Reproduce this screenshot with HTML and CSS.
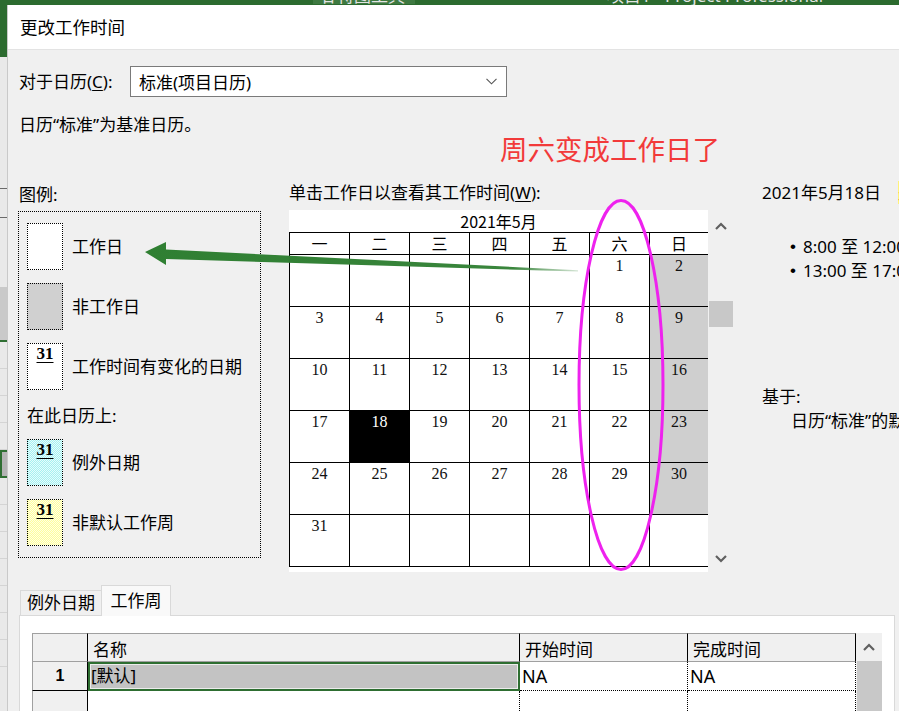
FILE: index.html
```html
<!DOCTYPE html>
<html lang="zh-CN">
<head>
<meta charset="utf-8">
<title>更改工作时间</title>
<link rel="stylesheet" href="styles.css">
</head>
<body>
<div class="app">
  <div class="topbar">
    <span class="tb-ctx">甘特图工具</span>
    <span class="tb-title">项目1 - Project Professional</span>
  </div>
  <div class="main">
    <div class="strip">
      <div class="s-green"></div>
      <div class="s-light s-h131"></div>
      <div class="s-line"></div>
      <div class="s-light s-h28"></div>
      <div class="s-line"></div>
      <div class="s-light s-h69"></div>
      <div class="s-grey"></div>
      <div class="s-gline"></div>
      <div class="s-row"></div>
      <div class="s-row"></div>
      <div class="s-row"></div>
      <div class="s-row"></div>
      <div class="s-sel"></div>
      <div class="s-row"></div>
      <div class="s-row"></div>
      <div class="s-row"></div>
      <div class="s-row"></div>
      <div class="s-row"></div>
      <div class="s-row"></div>
      <div class="s-row"></div>
    </div>
    <div class="dialog">
      <div class="titlebar">更改工作时间</div>
      <div class="body">
        <div class="row1">
          <span class="row1-label">对于日历(<u>C</u>):</span>
          <div class="select">
            <span>标准(项目日历)</span>
            <svg class="chev" width="11" height="7" viewBox="0 0 11 7"><polyline points="0.5,0.8 5.5,5.8 10.5,0.8" fill="none" stroke="#555" stroke-width="1.1"/></svg>
          </div>
        </div>
        <div class="row2">日历“标准”为基准日历。</div>
        <div class="cols">
          <div class="legend-col">
            <div class="lbl">图例:</div>
            <div class="legend">
              <div class="item"><div class="sw sw-work"></div><span class="itxt">工作日</span></div>
              <div class="item"><div class="sw sw-non"></div><span class="itxt">非工作日</span></div>
              <div class="item"><div class="sw sw-work"><span class="n31">31</span></div><span class="itxt">工作时间有变化的日期</span></div>
              <div class="onthis">在此日历上:</div>
              <div class="item"><div class="sw sw-exc"><span class="n31">31</span></div><span class="itxt">例外日期</span></div>
              <div class="item"><div class="sw sw-nd"><span class="n31">31</span></div><span class="itxt">非默认工作周</span></div>
            </div>
          </div>
          <div class="cal-col">
            <div class="cal-lbl">单击工作日以查看其工作时间(<u>W</u>):</div>
            <div class="cal">
              <div class="cal-white">
                <div class="cal-title">2021年5月</div>
                <div class="grid">
                  <div class="hd">一</div><div class="hd">二</div><div class="hd">三</div><div class="hd">四</div><div class="hd">五</div><div class="hd">六</div><div class="hd">日</div>
                  <div class="d"></div><div class="d"></div><div class="d"></div><div class="d"></div><div class="d"></div><div class="d">1</div><div class="d off">2</div>
                  <div class="d">3</div><div class="d">4</div><div class="d">5</div><div class="d">6</div><div class="d">7</div><div class="d">8</div><div class="d off">9</div>
                  <div class="d">10</div><div class="d">11</div><div class="d">12</div><div class="d">13</div><div class="d">14</div><div class="d">15</div><div class="d off">16</div>
                  <div class="d">17</div><div class="d sel">18</div><div class="d">19</div><div class="d">20</div><div class="d">21</div><div class="d">22</div><div class="d off">23</div>
                  <div class="d">24</div><div class="d">25</div><div class="d">26</div><div class="d">27</div><div class="d">28</div><div class="d">29</div><div class="d off">30</div>
                  <div class="d">31</div><div class="d"></div><div class="d"></div><div class="d"></div><div class="d"></div><div class="d"></div><div class="d"></div>
                </div>
              </div>
              <div class="cal-scroll">
                <div class="sarrow"><svg width="12" height="8" viewBox="0 0 12 8"><polyline points="1,7 6,2 11,7" fill="none" stroke="#606060" stroke-width="2.2"/></svg></div>
                <div class="sgap"></div>
                <div class="sthumb"></div>
                <div class="sfill"></div>
                <div class="sarrow sdown"><svg width="12" height="8" viewBox="0 0 12 8"><polyline points="1,1 6,6 11,1" fill="none" stroke="#606060" stroke-width="2.2"/></svg></div>
              </div>
            </div>
          </div>
          <div class="info-col">
            <div class="info-date">2021年5月18日<span class="hl">是工作日。</span></div>
            <ul class="times">
              <li><span class="dot">•</span>8:00 至 12:00</li>
              <li><span class="dot">•</span>13:00 至 17:00</li>
            </ul>
            <div class="based">基于:</div>
            <div class="based-on">日历“标准”的默认工作周。</div>
          </div>
        </div>
        <div class="tabs">
          <div class="tab">例外日期</div>
          <div class="tab active">工作周</div>
        </div>
        <div class="panel">
          <div class="table">
            <div class="tgrid">
              <div class="th rn"></div>
              <div class="th">名称</div>
              <div class="th">开始时间</div>
              <div class="th">完成时间</div>
              <div class="td rn rn1">1</div>
              <div class="td name">[默认]</div>
              <div class="td dat">NA</div>
              <div class="td dat">NA</div>
              <div class="td rn rn2"></div>
              <div class="td dat2"></div>
              <div class="td dat2"></div>
              <div class="td dat2"></div>
            </div>
            <div class="tscroll">
              <div class="tarrow"><svg width="12" height="8" viewBox="0 0 12 8"><polyline points="1,7 6,2 11,7" fill="none" stroke="#606060" stroke-width="2.2"/></svg></div>
              <div class="tthumb"></div>
            </div>
          </div>
        </div>
      </div>
    </div>
  </div>
  <div class="annot">周六变成工作日了</div>
  <svg class="overlay" width="899" height="711" viewBox="0 0 899 711">
    <defs>
      <linearGradient id="fade" x1="145" y1="0" x2="578" y2="0" gradientUnits="userSpaceOnUse">
        <stop offset="0" stop-color="#2f7f32" stop-opacity="1"/>
        <stop offset="0.85" stop-color="#2f7f32" stop-opacity="0.95"/>
        <stop offset="1" stop-color="#2f7f32" stop-opacity="0.2"/>
      </linearGradient>
    </defs>
    <polygon points="145,252 166,242 166,249.5 578,270.3 578,271.5 166,259 166,265" fill="url(#fade)"/>
    <ellipse cx="621" cy="385" rx="42" ry="184.5" fill="none" stroke="#ee22ee" stroke-width="3"/>
  </svg>
</div>
</body>
</html>
```
FILE: styles.css
```css
* { box-sizing: border-box; margin: 0; padding: 0; }
html, body { width: 899px; height: 711px; overflow: hidden; }
body {
  font-family: "Noto Sans", "Noto Sans CJK SC", "Microsoft YaHei", sans-serif;
  font-size: 17px;
  color: #000;
  background: #f0f0f0;
}
u { text-decoration: underline; text-underline-offset: 2px; text-decoration-thickness: 1px; }

.app { position: relative; width: 899px; height: 711px; display: flex; flex-direction: column; overflow: hidden; }

/* background application top bar */
.topbar { height: 5px; flex: none; background: #2c6b2f; display: flex; overflow: hidden; }
.tb-ctx {
  margin-left: 313px; width: 102px; height: 17px; margin-top: -13px;
  background: #3e7941; color: #e4e4e4; font-size: 17px; line-height: 17px; padding-left: 7px;
  white-space: nowrap; flex: none;
}
.tb-title {
  margin-left: 192px; height: 17px; margin-top: -13px; color: #e4e4e4;
  font-size: 17px; line-height: 17px; white-space: nowrap; flex: none;
}

.main { flex: 1; display: flex; min-height: 0; }

/* background application left strip */
.strip { width: 8px; flex: none; display: flex; flex-direction: column; background: #e9e9e9; border-right: 1px solid #c9c9c9; overflow: hidden; }
.s-green { height: 52px; background: #2c6b2f; flex: none; }
.s-light { background: #e9e9e9; flex: none; }
.s-h131 { height: 131px; }
.s-h28 { height: 28px; }
.s-h69 { height: 69px; }
.s-line { height: 1px; background: #6a6a6a; flex: none; }
.s-grey { height: 53px; background: #c9c9c9; flex: none; }
.s-gline { height: 2px; background: #2f6f33; flex: none; }
.s-row { height: 27px; border-bottom: 1px solid #d4d4d4; flex: none; }
.s-sel { height: 28px; border: 2px solid #2f6f33; border-right: none; background: #b4b4b4; flex: none; }

/* dialog */
.dialog { flex: 1; display: flex; flex-direction: column; background: #f0f0f0; min-width: 0; }
.titlebar {
  height: 45px; flex: none; background: #fff; border-bottom: 1px solid #e3e3e3;
  display: flex; align-items: center; padding-left: 12px; padding-bottom: 1px; font-size: 17.5px;
}
.body { flex: 1; padding: 16px 0 0 11px; display: flex; flex-direction: column; overflow: hidden; min-height: 0; }

.row1 { display: flex; align-items: center; height: 31px; flex: none; }
.row1-label { width: 111px; flex: none; line-height: 24px; }
.select {
  width: 377px; height: 31px; background: #fff; border: 1px solid #7a7a7a;
  display: flex; align-items: center; justify-content: space-between; padding: 0 9px 0 8px;
}
.chev { display: block; }
.row2 { margin-top: 16px; height: 24px; line-height: 24px; flex: none; }

.cols { margin-top: 46px; display: flex; align-items: flex-start; flex: none; white-space: nowrap; }

/* legend */
.legend-col { width: 242px; flex: none; }
.lbl { line-height: 24px; height: 24px; }
.legend {
  margin-top: 4px; margin-left: -1px; width: 243px; height: 347px;
  border: 1px dotted #000; padding: 11px 0 0 8px; display: flex; flex-direction: column;
}
.item { display: flex; align-items: center; height: 47px; flex: none; }
.item + .item { margin-top: 13px; }
.itxt { margin-left: 9px; line-height: 24px; }
.onthis { margin: 14px 0 11px; line-height: 24px; height: 24px; flex: none; }
.sw { width: 36px; height: 47px; border: 1px dotted #000; flex: none; display: flex; justify-content: center; align-items: flex-start; }
.sw-work { background: #fff; }
.sw-non { background: #d0d0d0; }
.sw-exc { background: repeating-conic-gradient(#a6f1f1 0 25%, #e6fdfd 0 50%) 0 0 / 2px 2px; }
.sw-nd { background: repeating-conic-gradient(#ffff9c 0 25%, #ffffe6 0 50%) 0 0 / 2px 2px; }
.n31 {
  font-family: "Liberation Serif", "Times New Roman", serif; font-weight: bold; font-size: 17px;
  line-height: 15px; margin-top: 2px; text-decoration: underline; text-underline-offset: 3px;
  text-decoration-thickness: 1px;
}

/* calendar */
.cal-col { width: 444px; margin-left: 28px; flex: none; }
.cal-lbl { line-height: 20px; height: 20px; }
.cal { margin-top: 7px; height: 362px; display: flex; }
.cal-white { width: 419px; height: 362px; background: #fff; overflow: hidden; flex: none; }
.cal-title { height: 22px; line-height: 22px; text-align: center; font-size: 16px; font-family: "Noto Sans CJK SC", sans-serif; }
.grid {
  display: grid; grid-template-columns: repeat(6, 60px) 59px;
  grid-template-rows: 22px repeat(6, 52px); border-bottom: 1px solid #000;
}
.hd, .d { border-left: 1px solid #000; border-top: 1px solid #000; }
.hd { text-align: center; line-height: 20px; font-size: 16px; font-family: "Noto Sans CJK SC", sans-serif; }
.d {
  text-align: center; font-family: "Liberation Serif", "Times New Roman", serif;
  font-size: 16px; line-height: 20px; padding-top: 1px; color: #111;
}
.d.off { background: #cfcfcf; }
.d.sel { background: #000; color: #fff; }
.cal-scroll { width: 25px; display: flex; flex-direction: column; flex: none; }
.sarrow { height: 32px; display: flex; align-items: center; justify-content: center; flex: none; }
.sdown { height: 26px; }
.sgap { height: 59px; flex: none; }
.sthumb { height: 26px; margin-left: 1px; background: #c8c8c8; flex: none; }
.sfill { flex: 1; }

/* info */
.info-col { margin-left: 29px; flex: none; }
.info-date { line-height: 20px; height: 20px; }
.hl { background: #fff27a; margin-left: 17px; }
.times { list-style: none; margin-top: 32px; padding-left: 28px; }
.times li { line-height: 24px; height: 24px; display: flex; }
.dot { display: inline-block; width: 13px; flex: none; font-family: "Liberation Sans", Arial, sans-serif; }
.based { margin-top: 102px; line-height: 24px; }
.based-on { padding-left: 29px; line-height: 24px; }

/* tabs */
.tabs { margin-top: 13px; height: 31px; display: flex; align-items: flex-end; padding-left: 1px; flex: none; }
.tab {
  width: 82px; height: 26px; border: 1px solid #d9d9d9; border-bottom: none;
  background: #f0f0f0; text-align: center; line-height: 24px;
}
.tab.active {
  width: 70px; height: 31px; margin-left: -1px; background: #f9f9f9;
  position: relative; z-index: 1; line-height: 29px;
}
.panel {
  margin-top: -1px; width: 876px; flex: 1; background: #fff; border: 1px solid #d9d9d9;
  padding: 17px 11px 0 12px;
}

/* table */
.table { display: flex; }
.tgrid { width: 824px; display: grid; grid-template-columns: 56px 432px 168px 168px; grid-template-rows: 29px 29px 40px; flex: none; }
.th {
  background: #f0f0f0; border-top: 1px solid #a0a0a0; border-bottom: 1px solid #a0a0a0;
  border-right: 1px solid #000; padding: 4px 0 0 5px; line-height: 24px; font-size: 17px;
}
.th.rn { border-left: 1px solid #a0a0a0; }
.td { font-size: 18px; line-height: 26px; }
.rn { background: #f0f0f0; border-left: 1px solid #a0a0a0; border-right: 1px solid #000; }
.rn1 {
  border-bottom: 1px solid #000; text-align: center;
  font-family: "Liberation Sans", Arial, sans-serif; font-weight: bold; font-size: 16px; line-height: 28px;
}
.name {
  background: #c3c3c3; border: 2px solid #2e6e31; box-shadow: inset 0 0 0 1px #ececec;
  padding-left: 1px; font-size: 17px; line-height: 24px;
}
.dat { border-right: 1px dotted #000; border-bottom: 1px dotted #000; padding-left: 2px; line-height: 28px; }
.dat2 { border-right: 1px dotted #000; }
.tscroll { width: 26px; background: #f0f0f0; display: flex; flex-direction: column; flex: none; }
.tarrow { height: 28px; display: flex; align-items: center; justify-content: center; flex: none; }
.tthumb { flex: 1; margin-left: 1px; background: #c8c8c8; }

/* annotations */
.annot {
  position: absolute; left: 500px; top: 133px; font-size: 27.5px; line-height: 30px;
  color: #f23a3a; white-space: nowrap; font-family: "Noto Sans CJK SC", sans-serif;
}
.overlay { position: absolute; left: 0; top: 0; pointer-events: none; }
```
